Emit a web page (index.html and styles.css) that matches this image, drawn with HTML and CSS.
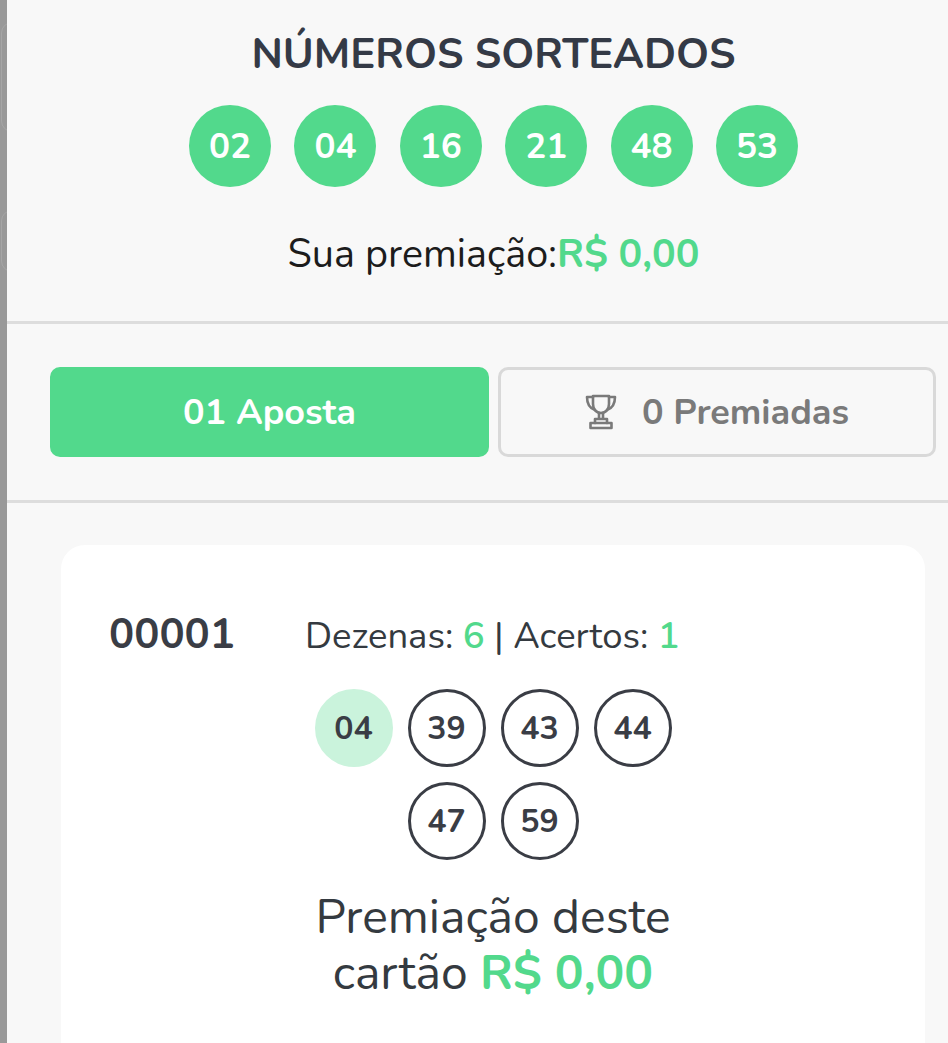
FILE: index.html
```html
<!DOCTYPE html>
<html lang="pt-BR">
<head>
    <meta charset="UTF-8">
    <meta name="viewport" content="width=device-width, initial-scale=1.0">
    <title>Números sorteados</title>
    <link rel="stylesheet" href="styles.css">
</head>
<body>
    <div class="side-strip">
        <div class="side-shape"></div>
        <div class="side-shape side-shape-low"></div>
    </div>
    <div class="panel">
        <section class="draw">
            <h1 class="draw-title">NÚMEROS SORTEADOS</h1>
            <div class="balls">
                <span class="ball">02</span>
                <span class="ball">04</span>
                <span class="ball">16</span>
                <span class="ball">21</span>
                <span class="ball">48</span>
                <span class="ball">53</span>
            </div>
            <p class="prize">Sua premiação:<strong class="green">R$ 0,00</strong></p>
        </section>

        <section class="tabs">
            <button class="tab tab-active">01 Aposta</button>
            <button class="tab">
                <svg class="trophy" viewBox="0 0 32 36" width="32" height="36" fill="none" stroke="#7a7a7a" stroke-width="2.6" stroke-linejoin="round" stroke-linecap="round">
                    <path d="M8 2h16v8c0 5-3 9-8 9s-8-4-8-9z"/>
                    <path d="M8 3H2c0 7 2 11 8 13"/>
                    <path d="M24 3h6c0 7-2 11-8 13"/>
                    <path d="M14 19v5M18 19v5"/>
                    <path d="M10 29v-4h12v4"/>
                    <rect x="5.5" y="29" width="21" height="5"/>
                </svg>
                <span>0 Premiadas</span>
            </button>
        </section>

        <section class="bets">
            <div class="card">
                <div class="card-head">
                    <span class="card-id">00001</span>
                    <span class="card-info">Dezenas: <span class="green-num">6</span> | Acertos: <span class="green-num">1</span></span>
                </div>
                <div class="picks">
                    <span class="pick pick-hit">04</span>
                    <span class="pick">39</span>
                    <span class="pick">43</span>
                    <span class="pick">44</span>
                    <span class="pick">47</span>
                    <span class="pick">59</span>
                </div>
                <p class="card-prize">Premiação deste<br>cartão <strong class="green">R$ 0,00</strong></p>
            </div>
        </section>
    </div>
</body>
</html>
```

FILE: styles.css
```css
html, body {
    height: 100%;
}
body {
    margin: 0;
    display: flex;
    overflow: hidden;
    background-color: #f8f8f8;
    font-family: "Nunito", "Open Sans", "Noto Sans", sans-serif;
    color: #343a40;
}
.side-strip {
    width: 7px;
    flex-shrink: 0;
    background-color: #999999;
    overflow: hidden;
    padding-top: 22px;
}
.side-shape {
    width: 20px;
    height: 108px;
    margin-left: 1px;
    border: 1px solid #a6a6a6;
    border-radius: 12px;
}
.side-shape-low {
    margin-top: 78px;
    height: 60px;
}
.panel {
    flex: 1;
    min-width: 0;
}
.draw {
    padding: 30px 0 42px 32px;
    text-align: center;
    border-bottom: 3px solid #dddddd;
}
.draw-title {
    margin: 0;
    font-size: 42px;
    line-height: 50px;
    font-weight: 700;
    color: #343a46;
}
.balls {
    display: flex;
    justify-content: center;
    gap: 23.4px;
    margin-top: 25px;
}
.ball {
    width: 82px;
    height: 82px;
    border-radius: 50%;
    background-color: #52d98c;
    color: #ffffff;
    font-size: 35px;
    font-weight: 700;
    display: flex;
    align-items: center;
    justify-content: center;
}
.prize {
    margin: 42px 0 0 0;
    font-size: 39.5px;
    line-height: 50px;
    color: #1c1c1c;
}
.green {
    color: #52d98c;
    font-weight: 700;
}
.tabs {
    display: flex;
    gap: 9px;
    padding: 43px 12px 43px 43px;
    border-bottom: 3px solid #dddddd;
}
.tab {
    flex: 1;
    height: 90px;
    border-radius: 10px;
    border: 3px solid #d9d9d9;
    background-color: transparent;
    color: #7a7a7a;
    font-family: inherit;
    font-size: 36px;
    font-weight: 700;
    display: flex;
    align-items: center;
    justify-content: center;
    gap: 25px;
}
.tab-active {
    flex: 0 0 439px;
    border-color: #52d98c;
    background-color: #52d98c;
    color: #ffffff;
}
.bets {
    padding: 42px 23px 0 54px;
}
.card {
    background-color: #ffffff;
    border-radius: 24px 24px 0 0;
    padding: 61px 48px 60px 48px;
    text-align: center;
}
.card-head {
    display: flex;
    align-items: center;
    gap: 70px;
}
.card-id {
    font-size: 42px;
    line-height: 58px;
    font-weight: 700;
    color: #3a3d45;
}
.card-info {
    padding-top: 2px;
    font-size: 36.5px;
    color: #343a40;
}
.green-num {
    color: #52d98c;
    font-weight: 600;
}
.picks {
    display: flex;
    flex-wrap: wrap;
    justify-content: center;
    gap: 15px;
    width: 372px;
    margin: 25px auto 0 auto;
}
.pick {
    box-sizing: border-box;
    width: 78px;
    height: 78px;
    border-radius: 50%;
    border: 3px solid #3a3d45;
    font-size: 32px;
    font-weight: 700;
    color: #3a3d45;
    display: flex;
    align-items: center;
    justify-content: center;
}
.pick-hit {
    border-color: #caf3dc;
    background-color: #caf3dc;
}
.card-prize {
    width: 440px;
    margin: 29px auto 0 auto;
    font-size: 48px;
    line-height: 56px;
    color: #343a40;
}
```
